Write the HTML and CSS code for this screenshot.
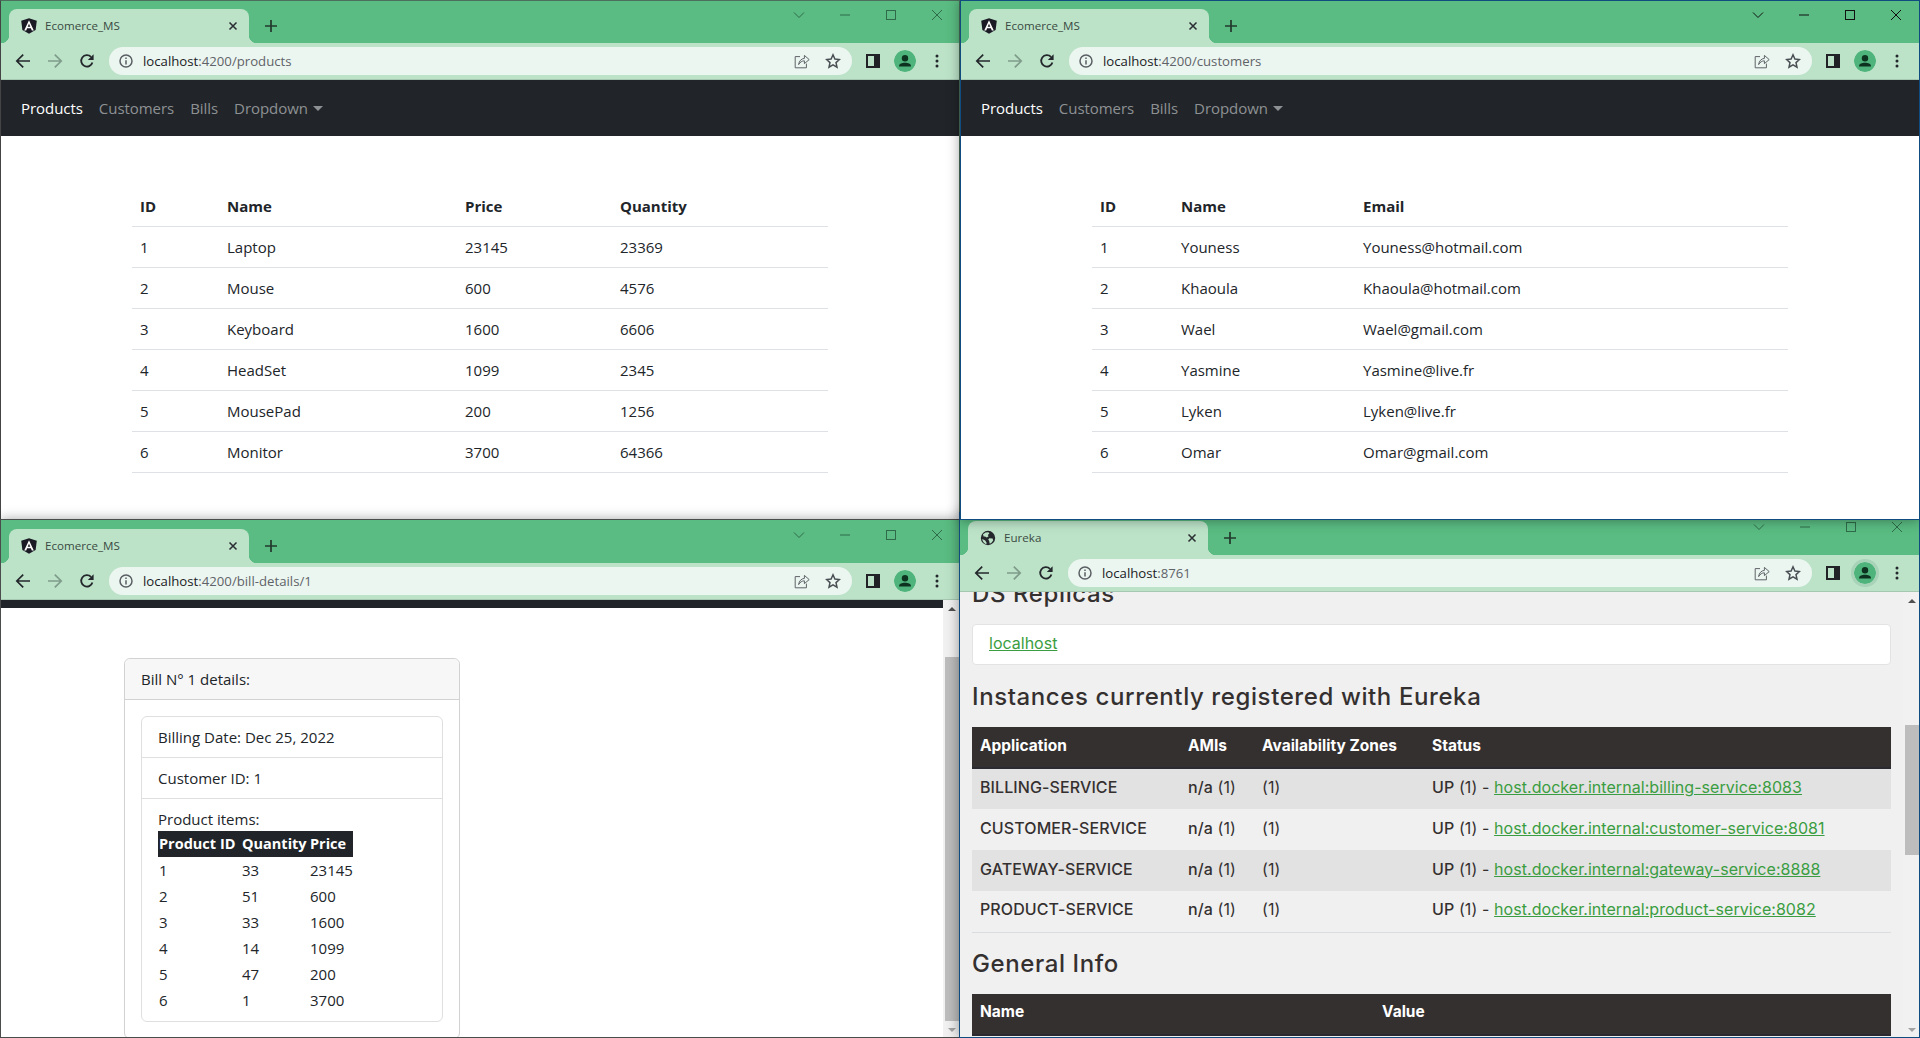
FILE: index.html
```html
<!DOCTYPE html>
<html lang="en">
<head>
  <meta charset="UTF-8">
  <title>Ecomerce_MS windows</title>
  <link rel="stylesheet" href="styles.css">
</head>
<body>

  <!-- shared toolbar icons -->
  <svg class="icon-defs" width="0" height="0">
    <symbol id="i-angular" viewBox="0 0 16 16">
      <path d="M8 .2 15.8 2.8 14.6 12 8 15.8 1.4 12 .2 2.8z" fill="#1b1b25"/>
      <path fill="#fff" fill-rule="evenodd" d="M8 2.2 3.2 12.6H5.2L6.1 10.2H9.9L10.8 12.6H12.8zM8 5.8 9.3 8.8H6.7z"/>
    </symbol>
    <symbol id="i-globe" viewBox="0 0 16 16">
      <circle cx="8" cy="8" r="7.2" fill="#24282c"/>
      <path fill="#bce3c8" d="M3 4.2 5.6 2.6 8.4 2.2 9.4 3.6 7.8 5 8.6 6.2 6.8 7.4 5 6.4 3.6 6.6zM9.4 8.2 12.6 8.6 13.2 10.4 11 13.2 9.6 13.4 9.2 11 8.2 9.6zM2.2 9 5.2 10.4 6.6 12.8 6.4 14.2C4 13.6 2.6 11.4 2.2 9z"/>
    </symbol>
    <symbol id="i-close" viewBox="0 0 16 16">
      <path d="M4 4 12 12M12 4 4 12" stroke="#2b2f33" stroke-width="1.8" fill="none"/>
    </symbol>
    <symbol id="i-plus" viewBox="0 0 16 16">
      <path d="M8 2V14M2 8H14" stroke="#23382c" stroke-width="1.7" fill="none"/>
    </symbol>
    <symbol id="i-arrow" viewBox="0 0 16 16">
      <path d="M15 8H2.2M8.2 1.6 1.8 8 8.2 14.4" stroke="currentColor" stroke-width="1.7" fill="none"/>
    </symbol>
    <symbol id="i-reload" viewBox="0 0 16 16">
      <path d="M13.4 9.4A5.7 5.7 0 1 1 12 3.9" stroke="#24282c" stroke-width="1.8" fill="none"/>
      <path d="M14.6 1.2V7H8.8z" fill="#24282c"/>
    </symbol>
    <symbol id="i-info" viewBox="0 0 16 16">
      <circle cx="8" cy="8" r="6" stroke="#5a5f63" stroke-width="1.5" fill="none"/>
      <path d="M8 7.2V11.4M8 4.6V6" stroke="#5a5f63" stroke-width="1.5" fill="none"/>
    </symbol>
    <symbol id="i-share" viewBox="0 0 16 16">
      <path d="M6 3.6H1.2V14.8H12.4V10.6" stroke="#5f6368" stroke-width="1" fill="none"/>
      <path d="M4.6 11.6C5 7.8 7.6 5.6 10.4 5.4V2.4L15.2 6.6 10.4 10.6V7.8C8 7.8 6 9.2 4.6 11.6z" stroke="#5f6368" stroke-width="1" fill="none"/>
    </symbol>
    <symbol id="i-star" viewBox="0 0 16 16">
      <path d="M8 1.8 9.9 6 14.4 6.5 11 9.6 12 14.2 8 11.8 4 14.2 5 9.6 1.6 6.5 6.1 6z" stroke="#4a4f53" stroke-width="1.5" fill="none"/>
    </symbol>
    <symbol id="i-panel" viewBox="0 0 14 14">
      <path fill="#202226" fill-rule="evenodd" d="M0 0H14V14H0zM2 2V12H8V2z"/>
    </symbol>
    <symbol id="i-avatar" viewBox="0 0 22 22">
      <circle cx="11" cy="11" r="11" fill="#4fb47b"/>
      <circle cx="11" cy="8.2" r="3.2" fill="#0d3320"/>
      <path d="M5 16.4C5 13.6 8 12.8 11 12.8S17 13.6 17 16.4z" fill="#0d3320"/>
    </symbol>
    <symbol id="i-dots" viewBox="0 0 4 14">
      <circle cx="2" cy="2" r="1.5" fill="#24282c"/>
      <circle cx="2" cy="7" r="1.5" fill="#24282c"/>
      <circle cx="2" cy="12" r="1.5" fill="#24282c"/>
    </symbol>
    <symbol id="i-chevron" viewBox="0 0 12 12">
      <path d="M1 3.5 6 8.5 11 3.5" stroke="currentColor" stroke-width="1" fill="none"/>
    </symbol>
    <symbol id="i-min" viewBox="0 0 12 12">
      <path d="M1 6H11" stroke="currentColor" stroke-width="1" fill="none"/>
    </symbol>
    <symbol id="i-max" viewBox="0 0 12 12">
      <rect x="1.5" y="1.5" width="9" height="9" stroke="currentColor" stroke-width="1" fill="none"/>
    </symbol>
    <symbol id="i-x" viewBox="0 0 12 12">
      <path d="M1 1 11 11M11 1 1 11" stroke="currentColor" stroke-width="1" fill="none"/>
    </symbol>
  </svg>

  <div class="desktop">

    <!-- Products window -->
    <section class="win win-tl">
      <div class="tabstrip">
        <div class="tab">
          <svg class="tab-icon"><use href="#i-angular"/></svg>
          <span class="tab-title">Ecomerce_MS</span>
          <svg class="tab-close"><use href="#i-close"/></svg>
        </div>
        <svg class="new-tab"><use href="#i-plus"/></svg>
        <div class="controls">
          <span class="ctl"><svg><use href="#i-chevron"/></svg></span>
          <span class="ctl"><svg><use href="#i-min"/></svg></span>
          <span class="ctl"><svg><use href="#i-max"/></svg></span>
          <span class="ctl"><svg><use href="#i-x"/></svg></span>
        </div>
      </div>
      <div class="toolbar">
        <span class="tool back"><svg><use href="#i-arrow"/></svg></span>
        <span class="tool fwd"><svg><use href="#i-arrow"/></svg></span>
        <span class="tool"><svg><use href="#i-reload"/></svg></span>
        <div class="address">
          <svg class="addr-info"><use href="#i-info"/></svg>
          <span class="url"><b>localhost</b>:4200/products</span>
          <span class="addr-end">
            <svg class="addr-icon"><use href="#i-share"/></svg>
            <svg class="addr-icon"><use href="#i-star"/></svg>
          </span>
        </div>
        <span class="tool tool-panel"><svg class="panel"><use href="#i-panel"/></svg></span>
        <span class="tool"><svg class="avatar"><use href="#i-avatar"/></svg></span>
        <span class="tool"><svg class="dots"><use href="#i-dots"/></svg></span>
      </div>
      <nav class="navbar">
        <a class="nav-link active">Products</a>
        <a class="nav-link">Customers</a>
        <a class="nav-link">Bills</a>
        <a class="nav-link caret">Dropdown</a>
      </nav>
      <div class="page">
        <table class="data products">
          <thead><tr><th>ID</th><th>Name</th><th>Price</th><th>Quantity</th></tr></thead>
          <tbody>
            <tr><td>1</td><td>Laptop</td><td>23145</td><td>23369</td></tr>
            <tr><td>2</td><td>Mouse</td><td>600</td><td>4576</td></tr>
            <tr><td>3</td><td>Keyboard</td><td>1600</td><td>6606</td></tr>
            <tr><td>4</td><td>HeadSet</td><td>1099</td><td>2345</td></tr>
            <tr><td>5</td><td>MousePad</td><td>200</td><td>1256</td></tr>
            <tr><td>6</td><td>Monitor</td><td>3700</td><td>64366</td></tr>
          </tbody>
        </table>
      </div>
    </section>

    <!-- Bill details window -->
    <section class="win win-bl">
      <div class="tabstrip">
        <div class="tab">
          <svg class="tab-icon"><use href="#i-angular"/></svg>
          <span class="tab-title">Ecomerce_MS</span>
          <svg class="tab-close"><use href="#i-close"/></svg>
        </div>
        <svg class="new-tab"><use href="#i-plus"/></svg>
        <div class="controls">
          <span class="ctl"><svg><use href="#i-chevron"/></svg></span>
          <span class="ctl"><svg><use href="#i-min"/></svg></span>
          <span class="ctl"><svg><use href="#i-max"/></svg></span>
          <span class="ctl"><svg><use href="#i-x"/></svg></span>
        </div>
      </div>
      <div class="toolbar">
        <span class="tool back"><svg><use href="#i-arrow"/></svg></span>
        <span class="tool fwd"><svg><use href="#i-arrow"/></svg></span>
        <span class="tool"><svg><use href="#i-reload"/></svg></span>
        <div class="address">
          <svg class="addr-info"><use href="#i-info"/></svg>
          <span class="url"><b>localhost</b>:4200/bill-details/1</span>
          <span class="addr-end">
            <svg class="addr-icon"><use href="#i-share"/></svg>
            <svg class="addr-icon"><use href="#i-star"/></svg>
          </span>
        </div>
        <span class="tool tool-panel"><svg class="panel"><use href="#i-panel"/></svg></span>
        <span class="tool"><svg class="avatar"><use href="#i-avatar"/></svg></span>
        <span class="tool"><svg class="dots"><use href="#i-dots"/></svg></span>
      </div>
      <div class="page page-scroll">
        <div class="bill-view">
          <div class="nav-stub"></div>
          <div class="card">
            <div class="card-header">Bill N° 1 details:</div>
            <div class="card-body">
              <ul class="list">
                <li>Billing Date: Dec 25, 2022</li>
                <li>Customer ID: 1</li>
                <li>
                  Product items:
                  <table class="items">
                    <thead><tr><th>Product ID</th><th>Quantity</th><th>Price</th></tr></thead>
                    <tbody>
                      <tr><td>1</td><td>33</td><td>23145</td></tr>
                      <tr><td>2</td><td>51</td><td>600</td></tr>
                      <tr><td>3</td><td>33</td><td>1600</td></tr>
                      <tr><td>4</td><td>14</td><td>1099</td></tr>
                      <tr><td>5</td><td>47</td><td>200</td></tr>
                      <tr><td>6</td><td>1</td><td>3700</td></tr>
                    </tbody>
                  </table>
                </li>
              </ul>
            </div>
          </div>
        </div>
        <div class="sbar">
          <span class="sbar-btn up"></span>
          <span class="sbar-thumb thumb-bill"></span>
          <span class="sbar-btn down"></span>
        </div>
      </div>
    </section>

    <!-- Eureka window -->
    <section class="win win-br">
      <div class="tabstrip">
        <div class="tab">
          <svg class="tab-icon"><use href="#i-globe"/></svg>
          <span class="tab-title">Eureka</span>
          <svg class="tab-close"><use href="#i-close"/></svg>
        </div>
        <svg class="new-tab"><use href="#i-plus"/></svg>
        <div class="controls">
          <span class="ctl"><svg><use href="#i-chevron"/></svg></span>
          <span class="ctl"><svg><use href="#i-min"/></svg></span>
          <span class="ctl"><svg><use href="#i-max"/></svg></span>
          <span class="ctl"><svg><use href="#i-x"/></svg></span>
        </div>
      </div>
      <div class="toolbar">
        <span class="tool back"><svg><use href="#i-arrow"/></svg></span>
        <span class="tool fwd"><svg><use href="#i-arrow"/></svg></span>
        <span class="tool"><svg><use href="#i-reload"/></svg></span>
        <div class="address">
          <svg class="addr-info"><use href="#i-info"/></svg>
          <span class="url"><b>localhost</b>:8761</span>
          <span class="addr-end">
            <svg class="addr-icon"><use href="#i-share"/></svg>
            <svg class="addr-icon"><use href="#i-star"/></svg>
          </span>
        </div>
        <span class="tool tool-panel"><svg class="panel"><use href="#i-panel"/></svg></span>
        <span class="tool"><svg class="avatar halo"><use href="#i-avatar"/></svg></span>
        <span class="tool"><svg class="dots"><use href="#i-dots"/></svg></span>
      </div>
      <div class="page page-scroll eureka">
        <div class="eureka-content">
          <h2>DS Replicas</h2>
          <div class="well"><a>localhost</a></div>
          <h2>Instances currently registered with Eureka</h2>
          <table class="eureka-table instances">
            <thead><tr><th>Application</th><th>AMIs</th><th>Availability Zones</th><th>Status</th></tr></thead>
            <tbody>
              <tr><td><b>BILLING-SERVICE</b></td><td><b>n/a</b> (1)</td><td>(1)</td><td><b>UP</b> (1) - <a>host.docker.internal:billing-service:8083</a></td></tr>
              <tr><td><b>CUSTOMER-SERVICE</b></td><td><b>n/a</b> (1)</td><td>(1)</td><td><b>UP</b> (1) - <a>host.docker.internal:customer-service:8081</a></td></tr>
              <tr><td><b>GATEWAY-SERVICE</b></td><td><b>n/a</b> (1)</td><td>(1)</td><td><b>UP</b> (1) - <a>host.docker.internal:gateway-service:8888</a></td></tr>
              <tr><td><b>PRODUCT-SERVICE</b></td><td><b>n/a</b> (1)</td><td>(1)</td><td><b>UP</b> (1) - <a>host.docker.internal:product-service:8082</a></td></tr>
            </tbody>
          </table>
          <h2>General Info</h2>
          <table class="eureka-table general">
            <thead><tr><th>Name</th><th>Value</th></tr></thead>
          </table>
        </div>
        <div class="sbar">
          <span class="sbar-btn up"></span>
          <span class="sbar-thumb thumb-eureka"></span>
          <span class="sbar-btn down"></span>
        </div>
      </div>
    </section>

    <!-- Customers window -->
    <section class="win win-tr">
      <div class="tabstrip">
        <div class="tab">
          <svg class="tab-icon"><use href="#i-angular"/></svg>
          <span class="tab-title">Ecomerce_MS</span>
          <svg class="tab-close"><use href="#i-close"/></svg>
        </div>
        <svg class="new-tab"><use href="#i-plus"/></svg>
        <div class="controls">
          <span class="ctl"><svg><use href="#i-chevron"/></svg></span>
          <span class="ctl"><svg><use href="#i-min"/></svg></span>
          <span class="ctl"><svg><use href="#i-max"/></svg></span>
          <span class="ctl"><svg><use href="#i-x"/></svg></span>
        </div>
      </div>
      <div class="toolbar">
        <span class="tool back"><svg><use href="#i-arrow"/></svg></span>
        <span class="tool fwd"><svg><use href="#i-arrow"/></svg></span>
        <span class="tool"><svg><use href="#i-reload"/></svg></span>
        <div class="address">
          <svg class="addr-info"><use href="#i-info"/></svg>
          <span class="url"><b>localhost</b>:4200/customers</span>
          <span class="addr-end">
            <svg class="addr-icon"><use href="#i-share"/></svg>
            <svg class="addr-icon"><use href="#i-star"/></svg>
          </span>
        </div>
        <span class="tool tool-panel"><svg class="panel"><use href="#i-panel"/></svg></span>
        <span class="tool"><svg class="avatar"><use href="#i-avatar"/></svg></span>
        <span class="tool"><svg class="dots"><use href="#i-dots"/></svg></span>
      </div>
      <nav class="navbar">
        <a class="nav-link active">Products</a>
        <a class="nav-link">Customers</a>
        <a class="nav-link">Bills</a>
        <a class="nav-link caret">Dropdown</a>
      </nav>
      <div class="page">
        <table class="data customers">
          <thead><tr><th>ID</th><th>Name</th><th>Email</th></tr></thead>
          <tbody>
            <tr><td>1</td><td>Youness</td><td>Youness@hotmail.com</td></tr>
            <tr><td>2</td><td>Khaoula</td><td>Khaoula@hotmail.com</td></tr>
            <tr><td>3</td><td>Wael</td><td>Wael@gmail.com</td></tr>
            <tr><td>4</td><td>Yasmine</td><td>Yasmine@live.fr</td></tr>
            <tr><td>5</td><td>Lyken</td><td>Lyken@live.fr</td></tr>
            <tr><td>6</td><td>Omar</td><td>Omar@gmail.com</td></tr>
          </tbody>
        </table>
      </div>
    </section>

  </div>

</body>
</html>
```

FILE: styles.css
```css
* {
  box-sizing: border-box;
}

html, body {
  margin: 0;
  height: 100%;
  overflow: hidden;
}

body {
  font-family: "Open Sans", "Noto Sans", sans-serif;
  font-size: 15px;
  color: #212529;
  background-color: #fff;
}

.icon-defs {
  position: absolute;
}

.desktop {
  position: relative;
  width: 1920px;
  height: 1038px;
  overflow: hidden;
}

/* windows sit on the desktop at their own place */
.win {
  position: absolute;
  display: flex;
  flex-direction: column;
  background-color: #fff;
  box-shadow: 0 0 12px rgba(0,0,0,0.4);
}

.win::after {
  content: "";
  position: absolute;
  inset: 0;
  border: 1px solid var(--frame);
  pointer-events: none;
}

.win-tl {
  --frame: #4b6f5c;
  left: 0;
  top: 0;
  width: 960px;
  height: 520px;
}

.win-tl::after {
  border-left-color: #444;
}

.win-bl {
  --frame: #4a4d4c;
  left: 0;
  top: 520px;
  width: 960px;
  height: 518px;
}

.win-bl::after {
  top: -1px;
}

.win-br {
  --frame: #104c80;
  left: 959px;
  top: 512px;
  width: 961px;
  height: 526px;
}

.win-tr {
  --frame: #104c80;
  left: 960px;
  top: 0;
  width: 960px;
  height: 520px;
}

/* tab strip */
.tabstrip {
  display: flex;
  flex: none;
  height: 43px;
  padding-left: 9px;
  background-color: #5abc82;
}

.tab {
  position: relative;
  display: flex;
  align-items: center;
  width: 240px;
  margin-top: 9px;
  padding-left: 12px;
  border-radius: 8px 8px 0 0;
  background-color: #bce3c8;
}

.tab::before, .tab::after {
  content: "";
  position: absolute;
  bottom: 0;
  width: 8px;
  height: 8px;
}

.tab::before {
  left: -8px;
  background: radial-gradient(circle at 0 0, transparent 8px, #bce3c8 8.5px);
}

.tab::after {
  right: -8px;
  background: radial-gradient(circle at 100% 0, transparent 8px, #bce3c8 8.5px);
}

.tab-icon {
  width: 16px;
  height: 16px;
}

.tab-title {
  margin-left: 8px;
  margin-bottom: 1px;
  font-size: 11.6px;
  color: #3a4a42;
}

.tab-close {
  width: 14px;
  height: 14px;
  margin-left: auto;
  margin-right: 9px;
}

.new-tab {
  width: 16px;
  height: 16px;
  margin: 18px 0 0 14px;
}

.controls {
  display: flex;
  margin-left: auto;
  color: #2f6b4a;
}

.ctl {
  display: flex;
  justify-content: center;
  align-items: center;
  width: 46px;
  height: 30px;
}

.ctl svg {
  width: 12px;
  height: 12px;
}

.win-tr .controls {
  padding-right: 1px;
  color: #111;
}

/* toolbar */
.toolbar {
  display: flex;
  flex: none;
  align-items: center;
  height: 37px;
  padding: 0 7px 1px 7px;
  border-bottom: 1px solid #a5c8b2;
  background-color: #bce3c8;
}

.tool {
  display: flex;
  justify-content: center;
  align-items: center;
  width: 32px;
  height: 32px;
}

.tool svg {
  width: 16px;
  height: 16px;
}

.back {
  color: #24282c;
}

.fwd {
  color: #7f9c8b;
}

.fwd svg {
  transform: scaleX(-1);
}

.tool-panel {
  margin-left: 5px;
}

.tool .panel {
  width: 14px;
  height: 14px;
}

.tool .avatar {
  width: 22px;
  height: 22px;
  border-radius: 50%;
}

.tool .halo {
  box-shadow: 0 0 0 3px #a8d3b8;
}

.tool .dots {
  width: 4px;
  height: 14px;
}

.address {
  display: flex;
  flex: 1;
  align-items: center;
  height: 28px;
  margin-left: 6px;
  padding: 0 4px 0 9px;
  border-radius: 14px;
  background-color: #ecf6f1;
}

.addr-info {
  width: 16px;
  height: 16px;
}

.url {
  margin-left: 9px;
  font-size: 13.2px;
  color: #5f6368;
}

.url b {
  font-weight: 400;
  color: #202124;
}

.addr-end {
  display: flex;
  gap: 15px;
  margin-left: auto;
  margin-right: 7px;
}

.addr-icon {
  width: 16px;
  height: 16px;
}

/* angular pages */
.navbar {
  display: flex;
  flex: none;
  align-items: center;
  height: 56px;
  padding-left: 13px;
  background-color: #212529;
}

.nav-link {
  padding: 0 8px;
  line-height: 24px;
  letter-spacing: -0.05px;
  color: #8e9194;
}

.nav-link.active {
  color: #fff;
}

.caret::after {
  content: "";
  display: inline-block;
  margin-left: 5px;
  vertical-align: 3px;
  border-top: 5px solid currentColor;
  border-left: 5px solid transparent;
  border-right: 5px solid transparent;
}

.page {
  flex: 1;
  min-height: 0;
  overflow: hidden;
  background-color: #fff;
}

.page-scroll {
  display: flex;
  justify-content: space-between;
}

.data {
  width: 696px;
  margin: 49px 0 0 132px;
  border-collapse: collapse;
  table-layout: fixed;
}

.data th, .data td {
  height: 41px;
  padding: 8px;
  line-height: 24px;
  text-align: left;
  border-bottom: 1px solid #dee2e6;
}

.data th {
  padding: 9px 8px 7px;
  font-weight: 700;
}

.products th:nth-child(1) { width: 87px; }
.products th:nth-child(2) { width: 238px; }
.products th:nth-child(3) { width: 155px; }

.customers th:nth-child(1) { width: 81px; }
.customers th:nth-child(2) { width: 182px; }

/* bill details */
.bill-view {
  flex: 1;
}

.nav-stub {
  height: 8px;
  background-color: #212529;
}

.card {
  width: 336px;
  margin: 50px 0 0 124px;
  border: 1px solid #d2d2d2;
  border-radius: 6px;
}

.card-header {
  padding: 8px 16px;
  line-height: 24px;
  border-bottom: 1px solid #d2d2d2;
  background-color: #f7f7f7;
  border-radius: 6px 6px 0 0;
}

.card-body {
  padding: 16px;
}

.list {
  margin: 0;
  padding: 0;
  list-style: none;
  border: 1px solid #dfdfdf;
  border-radius: 6px;
}

.list li {
  padding: 8px 16px;
  line-height: 24px;
  border-bottom: 1px solid #dfdfdf;
}

.list li:last-child {
  border-bottom: none;
}

.items {
  width: 195px;
  border-collapse: collapse;
  table-layout: fixed;
}

.items th, .items td {
  height: 26px;
  padding: 1px;
  text-align: left;
  white-space: nowrap;
}

.items th {
  font-weight: 700;
  font-size: 14.5px;
  color: #fff;
  background-color: #212529;
}

.items th:nth-child(1) { width: 83px; }
.items th:nth-child(2) { width: 68px; }

/* scrollbar */
.sbar {
  display: flex;
  flex: none;
  flex-direction: column;
  width: 17px;
  background-color: #f1f1f1;
}

.sbar-btn {
  display: flex;
  flex: none;
  justify-content: center;
  align-items: center;
  height: 17px;
}

.sbar-btn.up::after, .sbar-btn.down::after {
  content: "";
  border-left: 4px solid transparent;
  border-right: 4px solid transparent;
}

.sbar-btn.up::after {
  border-bottom: 4px solid #505050;
}

.sbar-btn.down::after {
  border-top: 4px solid #a3a3a3;
}

.sbar-btn.down {
  margin-top: auto;
}

.sbar-thumb {
  margin: 0 1px 0 2px;
  background-color: #bdbdbd;
}

.thumb-bill {
  height: 364px;
  margin-top: 40px;
}

.thumb-eureka {
  height: 130px;
  margin-top: 116px;
}

/* eureka page */
.eureka {
  font-family: Inter, "Open Sans", sans-serif;
  font-size: 16px;
  color: #353030;
  background-color: #f0f0f0;
}

.eureka-content {
  width: 919px;
  margin: -11px 0 0 13px;
}

.eureka h2 {
  margin: 0 0 17px;
  font-size: 24px;
  font-weight: 500;
  line-height: 26px;
  letter-spacing: 0.6px;
}

.eureka a {
  color: #3a9d41;
  text-decoration: underline;
}

.well {
  height: 41px;
  margin-bottom: 19px;
  padding: 0 16px;
  line-height: 36px;
  border: 1px solid #e3e3e3;
  border-radius: 4px;
  background-color: #fff;
}

.eureka-table {
  width: 919px;
  margin-bottom: 18px;
  border-collapse: collapse;
  table-layout: fixed;
}

.eureka-table th {
  height: 41px;
  padding: 0 8px 4px;
  text-align: left;
  font-size: 15.5px;
  font-weight: 700;
  color: #fff;
  background-color: #353030;
  border-bottom: 2px solid #2a2a30;
}

.eureka-table td {
  height: 41px;
  padding: 0 8px 4px;
  white-space: nowrap;
  letter-spacing: 0.1px;
}

.eureka-table td a {
  letter-spacing: 0.05px;
}

.eureka-table b {
  font-weight: 500;
}

.eureka-table tbody tr:nth-child(odd) {
  background-color: #e2e2e2;
}

.eureka-table tbody tr:last-child td {
  border-bottom: 1px solid #dadde0;
}

.instances th:nth-child(1) { width: 208px; }
.instances th:nth-child(2) { width: 74px; }
.instances th:nth-child(3) { width: 170px; }

.general th:nth-child(1) { width: 402px; }
```
